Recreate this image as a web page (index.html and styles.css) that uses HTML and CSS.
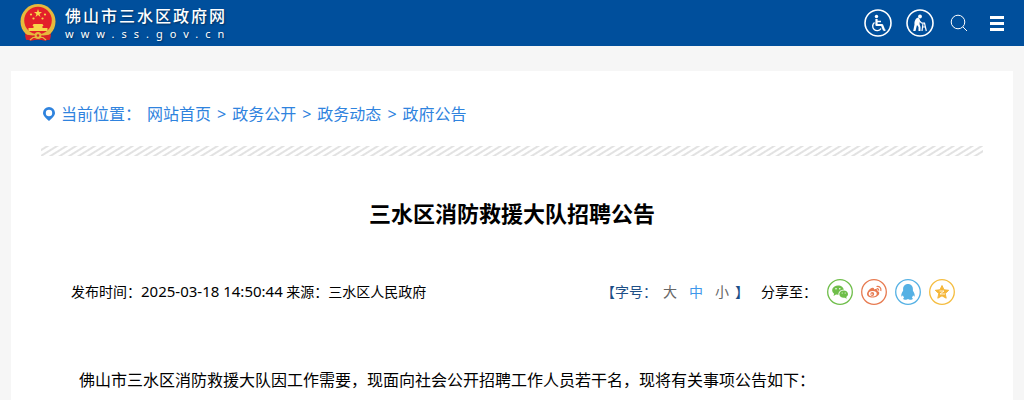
FILE: index.html
```
<!DOCTYPE html>
<html lang="zh-CN">
<head>
    <meta charset="UTF-8">
    <meta name="viewport" content="width=device-width, initial-scale=1.0">
    <title>三水区消防救援大队招聘公告 - 佛山市三水区政府网</title>
    <link rel="stylesheet" href="styles.css">
</head>
<body>
    <header class="header">
        <a href="#" class="logo">
            <svg class="emblem" viewBox="0 0 36 38" aria-hidden="true">
                <path fill="#d9222a" d="M5 27h26l-1 8.500-5 1-7-1-7 1-5-1z"/>
                <circle cx="18" cy="17.500" r="17.500" fill="#e6b93c"/>
                <circle cx="18" cy="16.500" r="13.800" fill="#e3202a"/>
                <path fill="#f7d64a" d="M18 5l1 3h3l-2.400 1.900.9 3-2.500-1.800-2.500 1.800.9-3L14 8h3z"/>
                <g fill="#f7d64a">
                    <circle cx="11" cy="10.500" r="1.100"/>
                    <circle cx="25" cy="10.500" r="1.100"/>
                    <circle cx="13.500" cy="14.500" r="1.100"/>
                    <circle cx="22.500" cy="14.500" r="1.100"/>
                    <path d="M13.500 20h9l1 2h-1v2h5v3h-19v-3h5v-2h-1z"/>
                </g>
                <path fill="#d9222a" d="M5 30.500l8 1 5-1.500 5 1.500 8-1-1 5-5 1-7-1-7 1-5-1z"/>
                <circle cx="18" cy="31.500" r="3.500" fill="#e6b93c"/>
                <circle cx="18" cy="31.500" r="1.300" fill="#d9222a"/>
                <path fill="none" stroke="#e6b93c" stroke-width="1.200" d="M10 36l3-2.500h10l3 2.500"/>
            </svg>
            <span class="logo-text">
                <strong class="logo-name">佛山市三水区政府网</strong>
                <span class="logo-url">www.ss.gov.cn</span>
            </span>
        </a>

        <nav class="tools">
            <a href="#" class="tool-round" aria-label="无障碍">
                <svg viewBox="0 0 28 28">
                    <circle cx="14" cy="14" r="13" fill="none" stroke="#fff" stroke-width="1.600"/>
                    <circle cx="12.500" cy="7.500" r="1.700" fill="#fff"/>
                    <g fill="none" stroke="#fff" stroke-linejoin="round">
                        <path stroke-width="2.200" d="M12.500 10v6h5.500l2 5"/>
                        <path stroke-width="1.400" d="M12.500 12.500H17M10.500 13.500a4.500 4.500 0 1 0 6.500 6M19.500 21.500l2-.7"/>
                    </g>
                </svg>
            </a>
            <a href="#" class="tool-round" aria-label="长者模式">
                <svg viewBox="0 0 28 28">
                    <circle cx="14" cy="14" r="13" fill="none" stroke="#fff" stroke-width="1.600"/>
                    <circle cx="14" cy="7.500" r="1.900" fill="#fff"/>
                    <path fill="#fff" d="M12.500 8.500l1.500 2.500-.5 4 1 3v4h-2v-4l-1.500-2-1.500 6H7.200l1.300-6.500c-.3-3.500 1-6.500 4-7z"/>
                    <path fill="none" stroke="#fff" stroke-width="1.200" d="M13 11.500l2.500 2.500h3l1.800 8M17 14.500l-1 7.500M16.500 18h3"/>
                </svg>
            </a>
            <a href="#" class="tool-search" aria-label="搜索">
                <svg viewBox="0 0 18 18">
                    <g fill="none" stroke="#fff">
                        <circle cx="8" cy="8" r="6.800"/>
                        <path d="M13 13l4 4"/>
                    </g>
                </svg>
            </a>
            <button type="button" class="menu-btn" aria-label="菜单">
                <span></span>
                <span></span>
                <span></span>
            </button>
        </nav>
    </header>

    <main class="container">
        <nav class="breadcrumb">
            <svg class="pin" viewBox="0 0 12 14" aria-hidden="true">
                <path fill="#2f83de" fill-rule="evenodd" d="M6 0a6 6 0 0 1 6 6c0 3-3 5-6 8-3-3-6-5-6-8a6 6 0 0 1 6-6zm0 2.800a3.200 3.200 0 1 0 0 6.400 3.200 3.200 0 0 0 0-6.400z"/>
            </svg>
            <span>当前位置：</span>
            <a href="#">网站首页</a>
            <span>&gt;</span>
            <a href="#">政务公开</a>
            <span>&gt;</span>
            <a href="#">政务动态</a>
            <span>&gt;</span>
            <a href="#">政府公告</a>
        </nav>
        <div class="stripes"></div>

        <article>
            <h1 class="title">三水区消防救援大队招聘公告</h1>

            <div class="info">
                <p class="source">发布时间：<time class="date">2025-03-18 14:50:44</time> 来源：三水区人民政府</p>
                <div class="font-size">
                    <span>【字号：</span>
                    <button type="button">大</button>
                    <button type="button" class="active">中</button>
                    <button type="button">小</button>
                    <span>】</span>
                </div>
                <div class="share">
                    <span class="share-label">分享至：</span>
                    <a href="#" aria-label="微信">
                        <svg viewBox="0 0 26 26">
                            <circle cx="13" cy="13" r="12.300" fill="none" stroke="#6fbe4a" stroke-width="1.300"/>
                            <path fill="#6fbe4a" d="M11 6.500c3.300 0 5.600 2 5.800 4.300-3.400 0-5.700 2.200-5.300 5l-2.500-.3L6.500 17l.6-2.300C3.300 12 5.500 6.500 11 6.500z"/>
                            <path fill="#6fbe4a" d="M16.600 11.500c2.700 0 4.400 1.700 4.400 3.600 0 1.300-.7 2.200-1.700 2.900l.4 1.700-1.900-1c-3 .5-5.500-1.200-5.500-3.600 0-2 1.900-3.600 4.300-3.600z"/>
                            <g fill="#fff">
                                <circle cx="9" cy="9.700" r=".8"/>
                                <circle cx="12.800" cy="9.700" r=".8"/>
                                <circle cx="15.200" cy="14" r=".6"/>
                                <circle cx="18.200" cy="14" r=".6"/>
                            </g>
                        </svg>
                    </a>
                    <a href="#" aria-label="微博">
                        <svg viewBox="0 0 26 26">
                            <circle cx="13" cy="13" r="12.300" fill="none" stroke="#e77a50" stroke-width="1.300"/>
                            <path fill="#e77a50" d="M11.500 8.700c1.200-.3 1.800.5 1.500 1.800 2.500-.9 4-.3 3.400 1.600 1.500.5 2.100 1.400 1.800 2.500-.6 2.500-3.600 4-6.700 4-3.200 0-5.700-1.400-5.500-3.800.2-2.500 3-5.600 5.500-6.100z"/>
                            <ellipse cx="11.700" cy="14.800" rx="4" ry="2.700" fill="#fff"/>
                            <circle cx="11.300" cy="15" r="1.900" fill="#e77a50"/>
                            <circle cx="10.900" cy="15.200" r=".7" fill="#fff"/>
                            <path fill="none" stroke="#e77a50" stroke-width="1.200" d="M15.500 7.500c3-.6 5 1.500 4.300 4.500M15.700 9.700c1.400-.2 2.200.6 1.900 2"/>
                        </svg>
                    </a>
                    <a href="#" aria-label="QQ">
                        <svg viewBox="0 0 26 26">
                            <circle cx="13" cy="13" r="12.300" fill="none" stroke="#55b1e4" stroke-width="1.300"/>
                            <path fill="#55b1e4" d="M13 5c3 0 4.900 2.200 4.900 5.200v1.500c1.400 2 2.100 4 1.700 5.600-.4.500-1-.1-1.500-1-.3 1-.7 1.700-1.200 2.200 1 .5 1.300 1.700 0 2-1.300.4-3.100.1-3.900-.6-.8.700-2.600 1-3.900.6-1.300-.3-1-1.500 0-2-.5-.5-.9-1.200-1.200-2.200-.5.900-1.100 1.500-1.500 1-.4-1.600.3-3.600 1.700-5.600v-1.500C8.100 7.200 10 5 13 5z"/>
                        </svg>
                    </a>
                    <a href="#" aria-label="QQ空间">
                        <svg viewBox="0 0 26 26">
                            <circle cx="13" cy="13" r="12.300" fill="none" stroke="#f5bd40" stroke-width="1.300"/>
                            <path fill="#f5b73a" stroke="#f5b73a" stroke-linejoin="round" d="M13 6.500l2 4.300 4.700.5-3.500 3.200 1 4.700-4.200-2.400-4.200 2.400 1-4.700-3.500-3.200 4.700-.5z"/>
                            <path fill="none" stroke="#fff" stroke-width=".8" d="M10.500 12h4.500l-4 3h5"/>
                        </svg>
                    </a>
                </div>
            </div>

            <div class="content">
                <p>佛山市三水区消防救援大队因工作需要，现面向社会公开招聘工作人员若干名，现将有关事项公告如下：</p>
            </div>
        </article>
    </main>
</body>
</html>
```
FILE: styles.css
```
* {
    margin: 0;
    padding: 0;
    box-sizing: border-box;
}

body {
    font-family: "Microsoft YaHei", "Noto Sans", "Noto Sans CJK SC", sans-serif;
    font-size: 14px;
    color: #000;
    background: #f6f6f6;
}

a {
    color: inherit;
    text-decoration: none;
}

button {
    font: inherit;
    color: inherit;
    background: none;
    border: none;
    cursor: pointer;
}

svg {
    display: block;
    width: 100%;
}

.header {
    display: flex;
    align-items: center;
    justify-content: space-between;
    height: 46px;
    padding: 0 20px;
    color: #fff;
    background: #004f9c;
}

.logo {
    display: flex;
    align-items: center;
    gap: 9px;
}

.emblem {
    width: 36px;
}

.logo-text {
    display: flex;
    flex-direction: column;
    padding-top: 2px;
    text-shadow: 1px 1px 2px rgba(0, 0, 0, 0.4);
}

.logo-name {
    font-size: 16px;
    font-weight: 500;
    line-height: 20px;
    letter-spacing: 2px;
}

.logo-url {
    font-size: 11px;
    line-height: 16px;
    letter-spacing: 7px;
}

.tools {
    display: flex;
    align-items: center;
    gap: 14px;
}

.tool-round {
    width: 28px;
}

.tool-search {
    width: 18px;
    margin: 0 8px 0 2px;
}

.menu-btn {
    display: flex;
    flex-direction: column;
    gap: 3px;
    width: 14px;
}

.menu-btn span {
    height: 3px;
    background: #fff;
}

.container {
    margin: 25px 11px 0;
    padding: 30px 30px 6px;
    background: #fff;
}

.breadcrumb {
    display: flex;
    align-items: center;
    gap: 6px;
    padding-left: 2px;
    font-size: 16px;
    line-height: 26px;
    color: #2f83de;
}

.pin {
    width: 12px;
}

.stripes {
    height: 10px;
    margin-top: 19px;
    background: repeating-linear-gradient(148deg, #fff 0, #fff 2px, #e2e2e2 3px, #e2e2e2 4px, #fff 5px);
}

.title {
    margin-top: 41px;
    font-size: 22px;
    line-height: 32px;
    text-align: center;
}

.info {
    display: flex;
    align-items: center;
    margin-top: 48px;
    padding: 0 28px 0 30px;
    line-height: 28px;
}

.source {
    flex: 1;
}

.date {
    font-size: 15px;
}

.font-size {
    display: flex;
    margin-right: 12px;
    color: #1d4f86;
}

.font-size button {
    padding: 0 6px;
    color: #666;
}

.font-size .active {
    color: #3e97ea;
}

.share {
    display: flex;
    align-items: center;
    gap: 8px;
}

.share-label {
    padding-right: 2px;
}

.share a {
    width: 26px;
}

.content {
    margin-top: 60px;
    padding: 0 38px;
    font-size: 16px;
    line-height: 28px;
}
```
